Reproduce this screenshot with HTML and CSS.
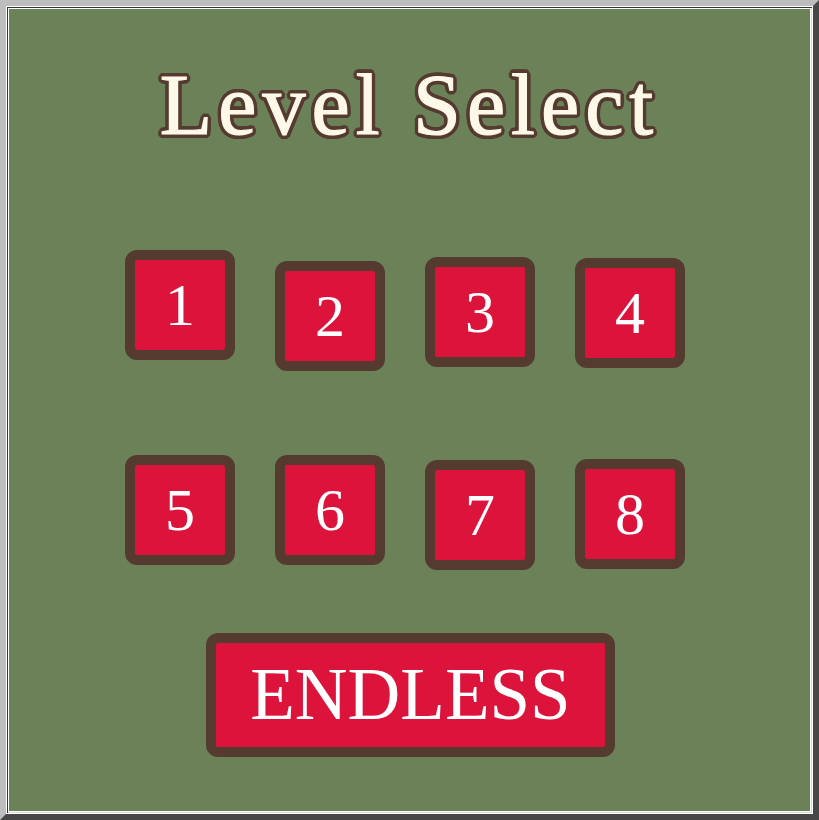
FILE: index.html
```html
<!DOCTYPE html>
<html lang="en">
  <head>
    <meta charset="UTF-8" />
    <meta name="viewport" content="width=device-width, initial-scale=1.0" />
    <title>Level Select</title>
    <link rel="stylesheet" href="styles.css">
  </head>
  <body>
    <div class="frame">
      <div class="board">
        <h1 class="title">Level Select</h1>

        <div class="level-row row-top">
          <button class="level">1</button>
          <button class="level">2</button>
          <button class="level">3</button>
          <button class="level">4</button>
        </div>

        <div class="level-row row-bottom">
          <button class="level">5</button>
          <button class="level">6</button>
          <button class="level">7</button>
          <button class="level">8</button>
        </div>

        <div class="endless-row">
          <button class="endless">ENDLESS</button>
        </div>
      </div>
    </div>
  </body>
</html>
```

FILE: styles.css
```css
html,
body {
  margin: 0;
  padding: 0;
  background-color: #6b8259;
}
.frame {
  box-sizing: border-box;
  width: 819px;
  height: 820px;
  border-style: solid;
  border-width: 6px;
  border-color: #bdbdbd #474747 #474747 #bdbdbd;
}
.board {
  box-sizing: border-box;
  height: 100%;
  border: 1px solid #ffffff;
  box-shadow: inset 1px 1px #333333, inset -1px -1px #d8dccf,
    inset 2px 2px #ffffff, inset -2px -2px #ffffff;
  background-color: #6b8259;
  display: flex;
  flex-direction: column;
}
.title {
  margin: 56px 0 0 0;
  text-align: center;
  font-family: "Liberation Serif", "Times New Roman", serif;
  font-weight: normal;
  font-size: 86px;
  line-height: 84px;
  letter-spacing: 6px;
  color: #fdf8e8;
  -webkit-text-stroke: 1.2px #fdf8e8;
  text-shadow: 4px 0 #553a30, -4px 0 #553a30, 0 4px #553a30,
    0 -4px #553a30, 2.8px 2.8px #553a30, -2.8px 2.8px #553a30,
    2.8px -2.8px #553a30, -2.8px -2.8px #553a30, 3.7px 1.5px #553a30,
    -3.7px 1.5px #553a30, 3.7px -1.5px #553a30, -3.7px -1.5px #553a30,
    1.5px 3.7px #553a30, -1.5px 3.7px #553a30, 1.5px -3.7px #553a30,
    -1.5px -3.7px #553a30;
}
.level-row {
  display: flex;
  align-items: flex-start;
  gap: 40px;
  padding-left: 118px;
}
.row-top {
  margin-top: 103px;
  height: 120px;
}
.row-bottom {
  margin-top: 85px;
  height: 120px;
}
.level,
.endless {
  box-sizing: border-box;
  border: 10px solid #553a30;
  border-radius: 12px;
  background-color: #dc143c;
  color: #ffffff;
  font-family: "Liberation Serif", "Times New Roman", serif;
  padding: 0;
  cursor: pointer;
}
.level {
  width: 110px;
  height: 110px;
  font-size: 60px;
  line-height: 86px;
}
.row-top .level:nth-child(2) { margin-top: 11px; }
.row-top .level:nth-child(3) { margin-top: 7px; }
.row-top .level:nth-child(4) { margin-top: 8px; }
.row-bottom .level:nth-child(3) { margin-top: 5px; }
.row-bottom .level:nth-child(4) { margin-top: 4px; }
.endless-row {
  display: flex;
  justify-content: center;
  margin-top: 58px;
  padding-left: 2px;
}
.endless {
  width: 409px;
  height: 124px;
  font-size: 73px;
  line-height: 100px;
}
```
